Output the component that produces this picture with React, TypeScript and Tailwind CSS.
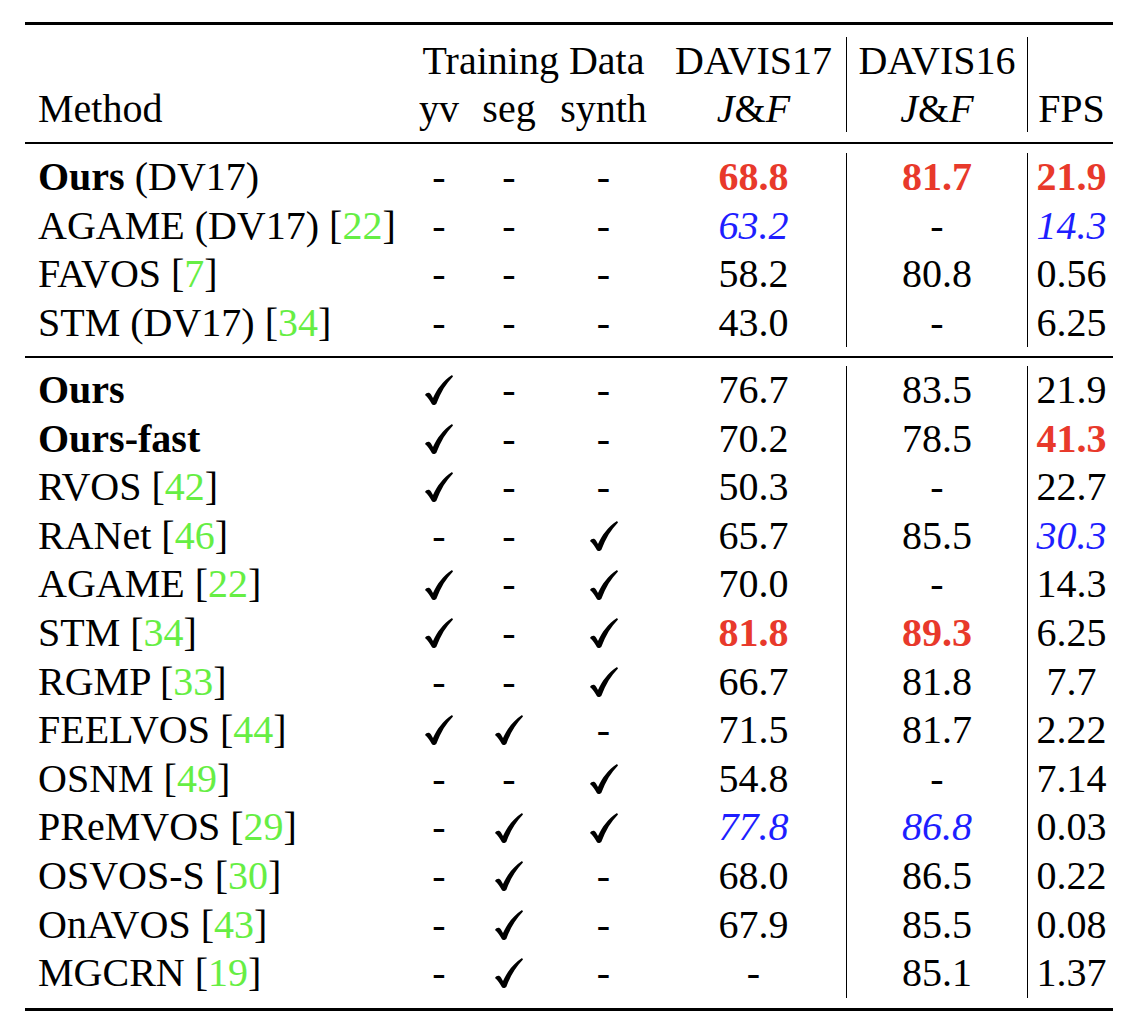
import React from 'react';

type Cell = string | { v: string; c: 'red' | 'blue' };

interface Row {
  name: React.ReactNode;
  yv: string;
  seg: string;
  synth: string;
  d17: Cell;
  d16: Cell;
  fps: Cell;
}

const Cite = ({ n }: { n: number }) => (
  <>
    [<span className="text-[#66ee44]">{n}</span>]
  </>
);

const red = (v: string): Cell => ({ v, c: 'red' });
const blue = (v: string): Cell => ({ v, c: 'blue' });

const groupOne: Row[] = [
  { name: <><b>Ours</b> (DV17)</>, yv: '-', seg: '-', synth: '-', d17: red('68.8'), d16: red('81.7'), fps: red('21.9') },
  { name: <>AGAME (DV17) <Cite n={22} /></>, yv: '-', seg: '-', synth: '-', d17: blue('63.2'), d16: '-', fps: blue('14.3') },
  { name: <>FAVOS <Cite n={7} /></>, yv: '-', seg: '-', synth: '-', d17: '58.2', d16: '80.8', fps: '0.56' },
  { name: <>STM (DV17) <Cite n={34} /></>, yv: '-', seg: '-', synth: '-', d17: '43.0', d16: '-', fps: '6.25' },
];

const groupTwo: Row[] = [
  { name: <b>Ours</b>, yv: 'x', seg: '-', synth: '-', d17: '76.7', d16: '83.5', fps: '21.9' },
  { name: <b>Ours-fast</b>, yv: 'x', seg: '-', synth: '-', d17: '70.2', d16: '78.5', fps: red('41.3') },
  { name: <>RVOS <Cite n={42} /></>, yv: 'x', seg: '-', synth: '-', d17: '50.3', d16: '-', fps: '22.7' },
  { name: <>RANet <Cite n={46} /></>, yv: '-', seg: '-', synth: 'x', d17: '65.7', d16: '85.5', fps: blue('30.3') },
  { name: <>AGAME <Cite n={22} /></>, yv: 'x', seg: '-', synth: 'x', d17: '70.0', d16: '-', fps: '14.3' },
  { name: <>STM <Cite n={34} /></>, yv: 'x', seg: '-', synth: 'x', d17: red('81.8'), d16: red('89.3'), fps: '6.25' },
  { name: <>RGMP <Cite n={33} /></>, yv: '-', seg: '-', synth: 'x', d17: '66.7', d16: '81.8', fps: '7.7' },
  { name: <>FEELVOS <Cite n={44} /></>, yv: 'x', seg: 'x', synth: '-', d17: '71.5', d16: '81.7', fps: '2.22' },
  { name: <>OSNM <Cite n={49} /></>, yv: '-', seg: '-', synth: 'x', d17: '54.8', d16: '-', fps: '7.14' },
  { name: <>PReMVOS <Cite n={29} /></>, yv: '-', seg: 'x', synth: 'x', d17: blue('77.8'), d16: blue('86.8'), fps: '0.03' },
  { name: <>OSVOS-S <Cite n={30} /></>, yv: '-', seg: 'x', synth: '-', d17: '68.0', d16: '86.5', fps: '0.22' },
  { name: <>OnAVOS <Cite n={43} /></>, yv: '-', seg: 'x', synth: '-', d17: '67.9', d16: '85.5', fps: '0.08' },
  { name: <>MGCRN <Cite n={19} /></>, yv: '-', seg: 'x', synth: '-', d17: '-', d16: '85.1', fps: '1.37' },
];

const cols = 'grid grid-cols-[385px_58px_82px_107px_190px_181px_87px]';

function Check() {
  return (
    <svg width="28" height="30" viewBox="0 0 28 30" className="block">
      <path
        d="M0 20 C1.5 17.5 4.5 17 6 19.5 L8 23 C12 14 18 6 27 0 L28 1.5 C21 8.5 15.5 17.5 11.5 28.5 C10.6 30.3 7.5 30.5 6.8 29 C5 25.5 2.5 22 0 20 Z"
        fill="black"
      />
    </svg>
  );
}

function Mark({ v }: { v: string }) {
  if (v === 'x')
    return (
      <div className="flex items-center justify-center">
        <Check />
      </div>
    );
  return <div className="text-center">-</div>;
}

function Num({ cell }: { cell: Cell }) {
  if (typeof cell === 'string') return <>{cell}</>;
  if (cell.c === 'red') return <span className="font-bold text-[#e8392b]">{cell.v}</span>;
  return <span className="italic text-[#1e1eff]">{cell.v}</span>;
}

function JF() {
  return (
    <span>
      <span className="italic">J</span>&amp;<span className="italic">F</span>
    </span>
  );
}

function Body({ rows, rowH }: { rows: Row[]; rowH: string }) {
  return (
    <div>
      {rows.map((r, i) => (
        <div key={i} className={`${cols} ${rowH}`}>
          <div className="pl-[13px] whitespace-nowrap">{r.name}</div>
          <Mark v={r.yv} />
          <Mark v={r.seg} />
          <Mark v={r.synth} />
          <div className="text-center pl-1 border-r border-black"><Num cell={r.d17} /></div>
          <div className="text-center border-r border-black"><Num cell={r.d16} /></div>
          <div className="text-center"><Num cell={r.fps} /></div>
        </div>
      ))}
    </div>
  );
}

export default function App() {
  return (
    <div className="w-[1138px] min-h-[1026px] bg-white px-[25px] pt-[22px] [font-family:'Liberation_Serif',serif] text-[40px] text-black">
      <div className="h-[3px] bg-black" />

      <div className="mt-[12px] leading-[47.5px]">
        <div className={cols}>
          <div />
          <div className="col-span-3 text-center">Training Data</div>
          <div className="text-center pl-1 border-r border-black">DAVIS17</div>
          <div className="text-center border-r border-black">DAVIS16</div>
          <div />
        </div>
        <div className={cols}>
          <div className="pl-[13px]">Method</div>
          <div className="text-center">yv</div>
          <div className="text-center">seg</div>
          <div className="text-center">synth</div>
          <div className="text-center pl-1 border-r border-black"><JF /></div>
          <div className="text-center border-r border-black"><JF /></div>
          <div className="text-center">FPS</div>
        </div>
      </div>

      <div className="mt-[10px] h-[2px] bg-black" />
      <div className="mt-[9px]">
        <Body rows={groupOne} rowH="h-[48.5px] leading-[48.5px]" />
      </div>
      <div className="mt-[9px] h-[2px] bg-black" />
      <div className="mt-[8px]">
        <Body rows={groupTwo} rowH="h-[48.6px] leading-[48.6px]" />
      </div>
      <div className="mt-[10px] h-[3px] bg-black" />
    </div>
  );
}
